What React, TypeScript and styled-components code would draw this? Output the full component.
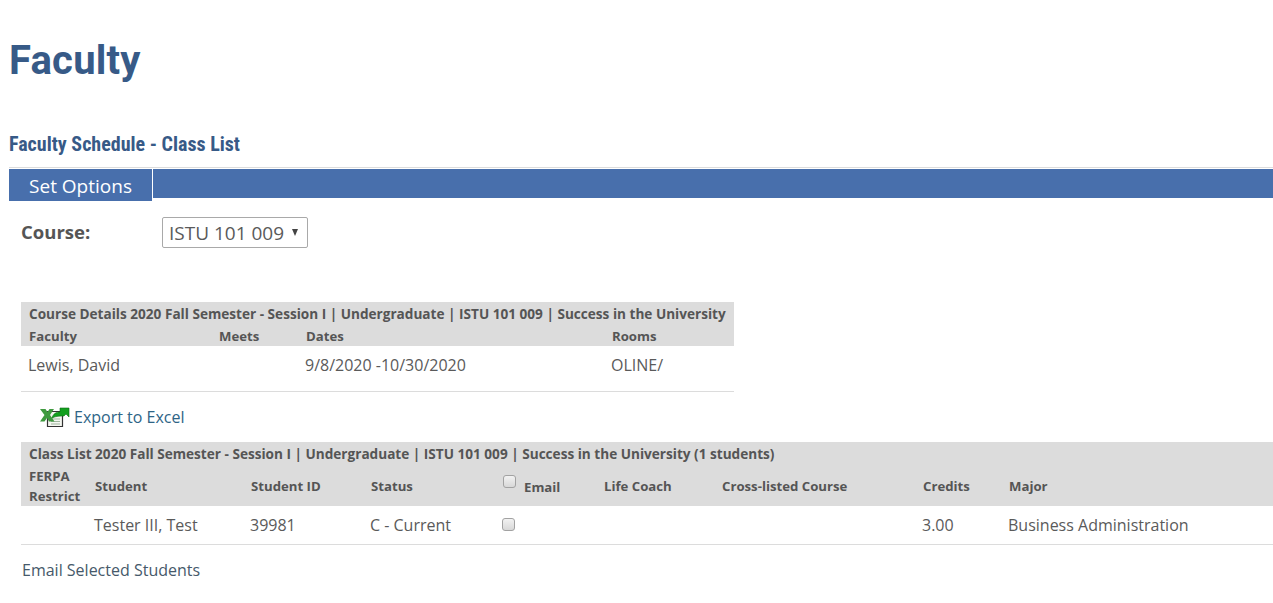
import React from 'react'
import styled, { createGlobalStyle } from 'styled-components'

const GlobalStyle = createGlobalStyle`
  html, body {
    margin: 0;
    padding: 0;
    background: #fff;
    color: #555;
    font-family: "Open Sans", "Liberation Sans", sans-serif;
    font-size: 16px;
  }
`

const Page = styled.div`
  height: 603px;
  overflow: hidden;
  padding-left: 9px;
`

const PageTitle = styled.h1`
  margin: 0;
  padding-top: 38px;
  height: 61px;
  font: 700 40px/46px Roboto, "Liberation Sans", sans-serif;
  letter-spacing: 0.2px;
  color: #375a87;
`

const SubTitle = styled.h2`
  margin: 0;
  padding-top: 32px;
  height: 36px;
  font: 700 20px/26px Roboto, "Liberation Sans", sans-serif;
  font-stretch: condensed;
  color: #375a87;
  border-bottom: 1px solid #dcdcdc;
`

const TabBar = styled.div`
  display: flex;
  align-items: flex-start;
  height: 32px;
  margin-top: 1px;
  background: linear-gradient(#486fac, #486fac) no-repeat 0 0 / 100% 29px;
`

const Tab = styled.div`
  width: 144px;
  height: 32px;
  border-right: 1px solid #fff;
  background: #486fac;
  color: #fff;
  font-size: 19px;
  line-height: 34px;
  text-align: center;
  box-sizing: border-box;
`

const OptionRow = styled.div`
  display: flex;
  align-items: center;
  margin: 16px 0 0 12px;
  height: 31px;
`

const OptionLabel = styled.label`
  width: 141px;
  font-size: 18.5px;
  font-weight: 700;
  color: #555;
  position: relative;
  top: -1px;
`

const SelectBox = styled.div`
  display: flex;
  align-items: center;
  justify-content: space-between;
  box-sizing: border-box;
  width: 146px;
  height: 31px;
  padding: 0 9px 0 6px;
  border: 1px solid #a9a9a9;
  border-radius: 2px;
  font-size: 19px;
  color: #5a5a5a;
`

const Caret = styled.span`
  width: 0;
  height: 0;
  margin-bottom: 1px;
  border-left: 3.5px solid transparent;
  border-right: 3.5px solid transparent;
  border-top: 7px solid #444;
`

const Section = styled.section<{ $width: number; $top: number }>`
  margin: ${({ $top }) => $top}px 0 0 12px;
  width: ${({ $width }) => $width}px;
`

const Head = styled.div`
  background: #dcdcdc;
  color: #555;
  font-size: 13.2px;
  font-weight: 700;
`

const Caption = styled.div`
  padding: 3px 0 0 8px;
  height: 21px;
  line-height: 18px;
  font-size: 13.6px;
  box-sizing: border-box;
  white-space: nowrap;
`

const Row = styled.div<{ $cols: string; $height: number }>`
  display: grid;
  grid-template-columns: ${({ $cols }) => $cols};
  align-items: center;
  height: ${({ $height }) => $height}px;
`

const HeadRow = styled(Row)`
  padding-top: 2px;
  box-sizing: border-box;
`

const BodyRow = styled(Row)<{ $lift?: number }>`
  font-size: 16px;
  color: #5a5a5a;
  border-bottom: 1px solid #dcdcdc;
  padding-bottom: ${({ $lift }) => $lift ?? 0}px;
`

const HeadCell = styled.div`
  padding-left: 8px;
  line-height: 20px;
  white-space: nowrap;
`

const Cell = styled.div`
  padding-left: 7px;
  white-space: nowrap;
`

const ExportLink = styled.a`
  display: flex;
  align-items: center;
  gap: 4px;
  height: 24px;
  margin: 13px 0 13px 19px;
  color: #2e6486;
  font-size: 16px;
`

const Check = styled.span`
  display: inline-block;
  box-sizing: border-box;
  width: 13px;
  height: 13px;
  border: 1px solid #a2a2a2;
  border-radius: 3px;
  background: linear-gradient(#f2f2f2, #d8d8d8);
`

const HeadCheck = styled(Check)`
  position: relative;
  top: -4px;
  margin-right: 8px;
`

const EmailHead = styled(HeadCell)`
  padding-top: 2px;
`

const FooterLink = styled.a`
  display: block;
  margin: 14px 0 0 13px;
  color: #46596a;
  font-size: 16px;
  line-height: 22px;
`

const ExcelIcon = () => (
  <svg width="30" height="20" viewBox="0 0 30 20">
    <path d="M7.500 4.500h12l3 3v12h-15z" fill="#f4f6f0" stroke="#333" strokeWidth="1.2" />
    <path d="M11 12h9M11 14.500h9M11 17h9" stroke="#9fb59f" strokeWidth="1" />
    <path d="M0 2h5.500l2 3 2-3H14l-4 6 4.500 6.500H9L7 11l-2.500 3.500H0L4.500 8z" fill="#3f9a3f" />
    <path d="M12 11c1-4 4-6 8-6V1l9 0v9l-3-3-2 2c-4 0-8 0-12 2z" fill="#12a01e" stroke="#0d6b14" strokeWidth=".6" />
  </svg>
)

const detailCols = '190px 87px 306px 1fr'
const classCols = '66px 156px 120px 132px 101px 118px 201px 86px 1fr'

const App: React.FC = () => (
  <>
    <GlobalStyle />
    <Page>
      <PageTitle>Faculty</PageTitle>
      <SubTitle>Faculty Schedule - Class List</SubTitle>
      <TabBar>
        <Tab>Set Options</Tab>
      </TabBar>
      <OptionRow>
        <OptionLabel>Course:</OptionLabel>
        <SelectBox>
          ISTU 101 009
          <Caret />
        </SelectBox>
      </OptionRow>

      <Section $width={713} $top={54}>
        <Head>
          <Caption>Course Details 2020 Fall Semester - Session I | Undergraduate | ISTU 101 009 | Success in the University</Caption>
          <HeadRow $cols={detailCols} $height={23}>
            <HeadCell>Faculty</HeadCell>
            <HeadCell>Meets</HeadCell>
            <HeadCell>Dates</HeadCell>
            <HeadCell>Rooms</HeadCell>
          </HeadRow>
        </Head>
        <BodyRow $cols={detailCols} $height={37} $lift={8}>
          <Cell>Lewis, David</Cell>
          <Cell />
          <Cell>9/8/2020 -10/30/2020</Cell>
          <Cell>OLINE/</Cell>
        </BodyRow>
      </Section>

      <Section $width={1252} $top={0}>
        <ExportLink>
          <ExcelIcon />
          Export to Excel
        </ExportLink>
        <Head>
          <Caption>Class List 2020 Fall Semester - Session I | Undergraduate | ISTU 101 009 | Success in the University (1 students)</Caption>
          <HeadRow $cols={classCols} $height={43}>
            <HeadCell>FERPA<br />Restrict</HeadCell>
            <HeadCell>Student</HeadCell>
            <HeadCell>Student ID</HeadCell>
            <HeadCell>Status</HeadCell>
            <EmailHead><HeadCheck />Email</EmailHead>
            <HeadCell>Life Coach</HeadCell>
            <HeadCell>Cross-listed Course</HeadCell>
            <HeadCell>Credits</HeadCell>
            <HeadCell>Major</HeadCell>
          </HeadRow>
        </Head>
        <BodyRow $cols={classCols} $height={38}>
          <Cell />
          <Cell>Tester III, Test</Cell>
          <Cell>39981</Cell>
          <Cell>C - Current</Cell>
          <Cell><Check /></Cell>
          <Cell />
          <Cell />
          <Cell>3.00</Cell>
          <Cell>Business Administration</Cell>
        </BodyRow>
      </Section>

      <FooterLink>Email Selected Students</FooterLink>
    </Page>
  </>
)

export default App
